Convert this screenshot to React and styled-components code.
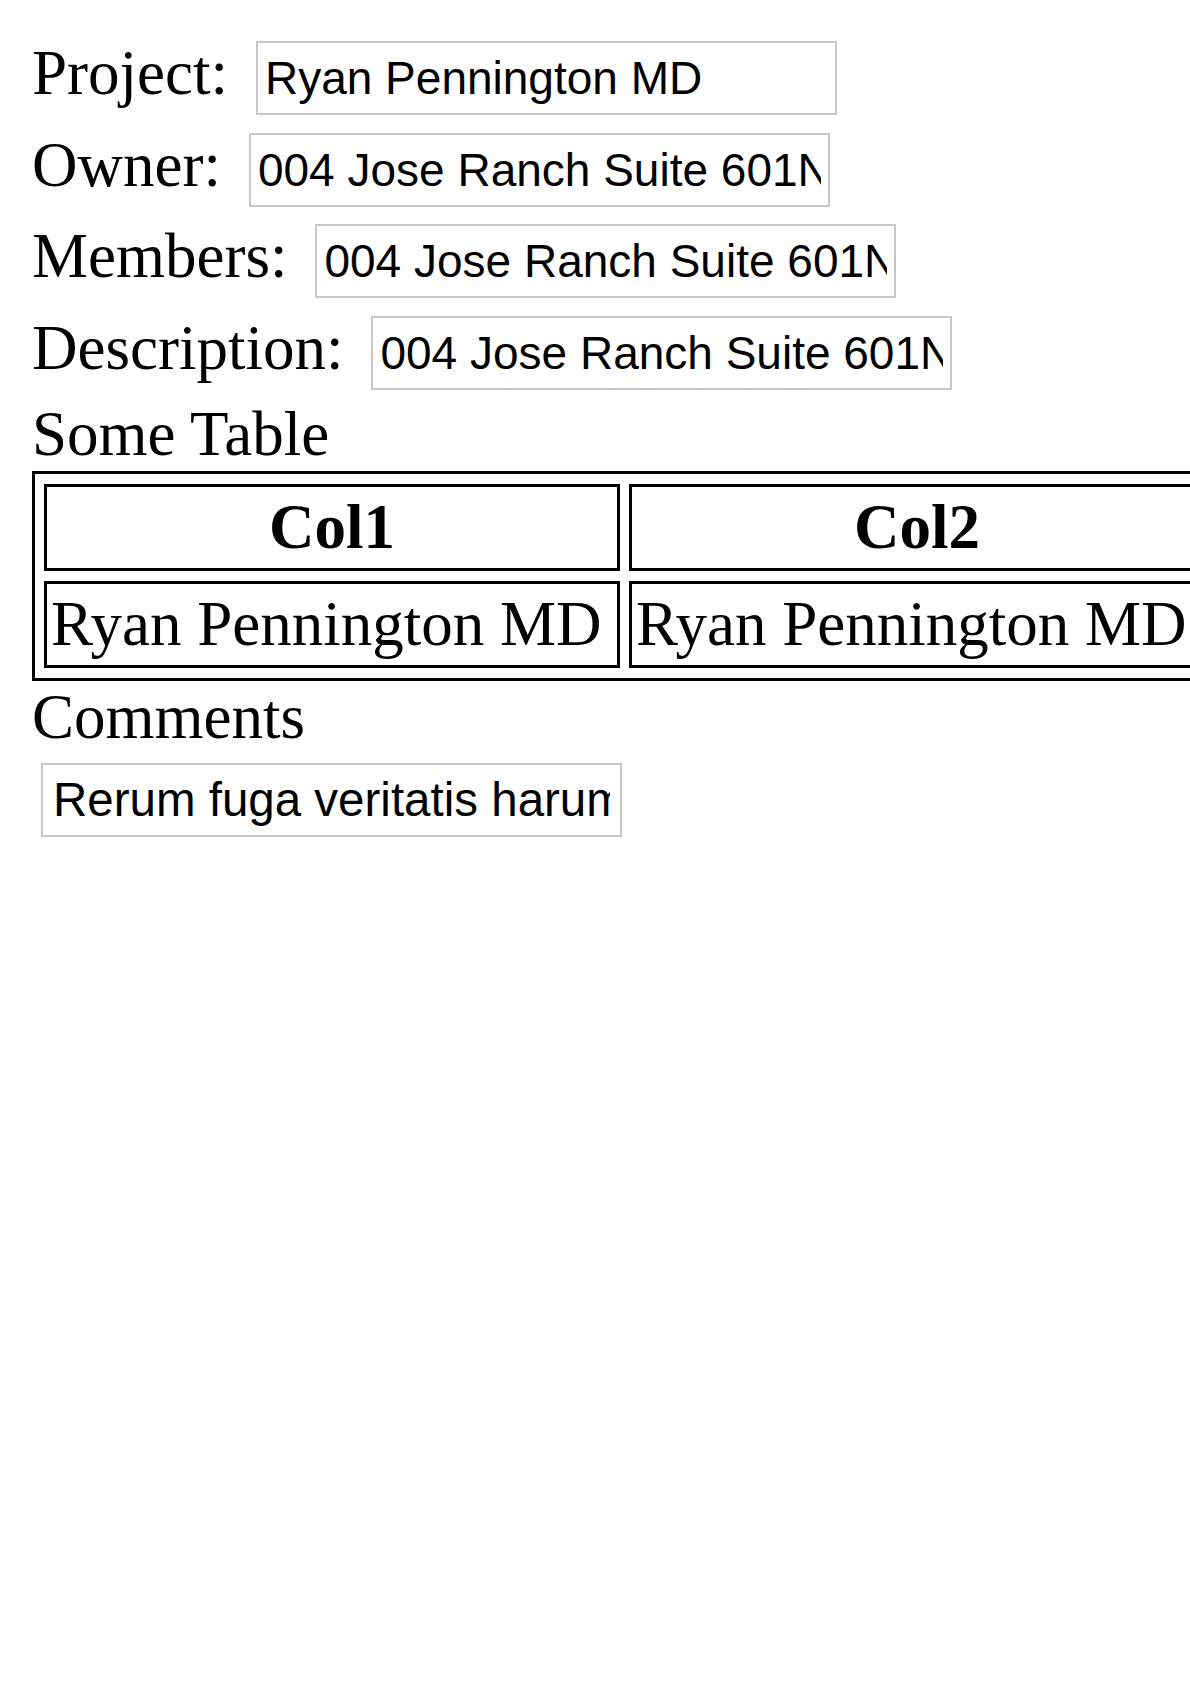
import React from 'react';
import styled, {createGlobalStyle} from 'styled-components';

const GlobalStyle = createGlobalStyle`
  html,
  body {
    margin: 0;
    padding: 0;
    background: #ffffff;
    overflow-x: hidden;
  }

  body {
    font-family: 'Liberation Serif', 'Times New Roman', serif;
    color: #000000;
  }
`;

const Page = styled.div`
  padding: 37px 32px 32px;
  font-size: 63px;
  line-height: normal;
`;

const Fields = styled.div`
  display: flex;
  flex-direction: column;
  gap: 13.5px;
`;

const FieldRow = styled.div`
  display: flex;
  align-items: baseline;
  gap: 28px;
`;

const Label = styled.label`
  font-size: 63px;
  white-space: nowrap;
`;

const TextBox = styled.input`
  box-sizing: border-box;
  display: block;
  width: 581px;
  height: 74px;
  margin: ${props => props.$margin || '0'};
  padding: 0 ${props => props.$pad || 7}px;
  border: 2px solid #c8c8c8;
  border-radius: 0;
  background: #ffffff;
  color: #000000;
  font-family: 'Liberation Sans', Arial, Helvetica, sans-serif;
  font-size: ${props => props.$size || 46}px;
  appearance: none;
  outline: none;
`;

const Heading = styled.div`
  margin-top: ${props => props.$top || '0'};
  font-size: 63px;
`;

const Table = styled.table`
  width: max-content;
  border: 3px solid #000000;
  border-spacing: 9px 10px;
  font-family: 'Liberation Serif', 'Times New Roman', serif;
  font-size: 63px;
`;

const HeadCell = styled.th`
  width: 562px;
  min-width: 562px;
  padding: 4px;
  border: 3px solid #000000;
  font-weight: bold;
  text-align: center;
  white-space: nowrap;
`;

const Cell = styled.td`
  width: 562px;
  min-width: 562px;
  padding: 4px;
  border: 3px solid #000000;
  text-align: left;
  white-space: nowrap;
`;

const fields = [
  {label: 'Project:', value: 'Ryan Pennington MD'},
  {label: 'Owner:', value: '004 Jose Ranch Suite 601North Lisa, NE 12345'},
  {label: 'Members:', value: '004 Jose Ranch Suite 601North Lisa, NE 12345'},
  {label: 'Description:', value: '004 Jose Ranch Suite 601North Lisa, NE 12345'},
];

const columns = ['Col1', 'Col2'];
const rows = [['Ryan Pennington MD', 'Ryan Pennington MD']];

const App = () => {
  return (
    <>
      <GlobalStyle />
      <Page>
        <Fields>
          {fields.map(field => (
            <FieldRow key={field.label}>
              <Label>{field.label}</Label>
              <TextBox type="text" value={field.value} readOnly />
            </FieldRow>
          ))}
        </Fields>

        <Heading $top="8px">Some Table</Heading>
        <Table>
          <thead>
            <tr>
              {columns.map(col => (
                <HeadCell key={col}>{col}</HeadCell>
              ))}
            </tr>
          </thead>
          <tbody>
            {rows.map((row, i) => (
              <tr key={i}>
                {row.map((value, j) => (
                  <Cell key={j}>{value}</Cell>
                ))}
              </tr>
            ))}
          </tbody>
        </Table>

        <Heading>Comments</Heading>
        <TextBox
          type="text"
          value="Rerum fuga veritatis harum dolorem quae"
          $pad={10}
          $size={47.5}
          $margin="9px 0 0 9px"
          readOnly
        />
      </Page>
    </>
  );
};

export default App;
